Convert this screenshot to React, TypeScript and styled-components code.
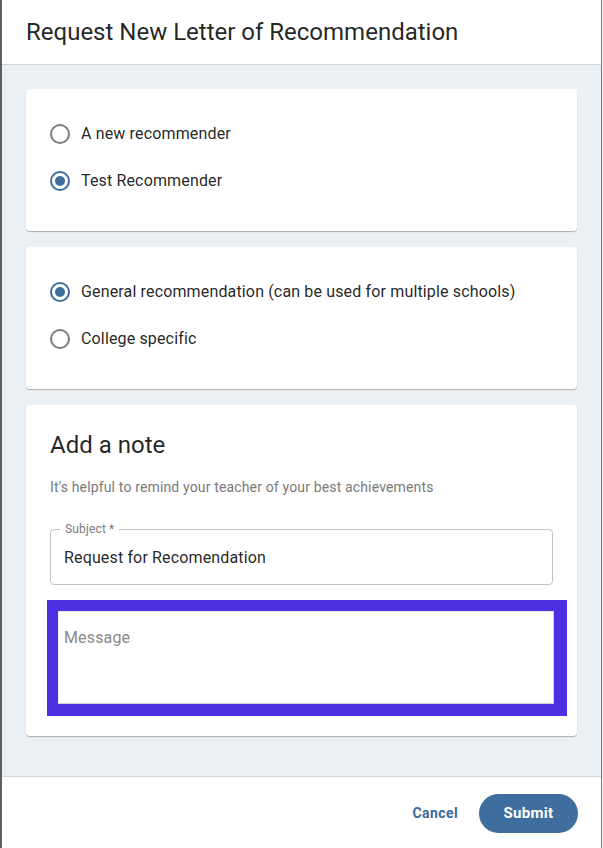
import React from "react";
import styled, { createGlobalStyle } from "styled-components";

const Global = createGlobalStyle`
  html, body { margin: 0; padding: 0; }
  body {
    background: #ffffff;
    font-family: Roboto, "Noto Sans", Arial, sans-serif;
    color: rgba(0,0,0,0.87);
  }
  * { box-sizing: border-box; }
`;

const Screen = styled.div`
  display: flex;
  width: 603px;
  height: 848px;
  overflow: hidden;
`;

const Backdrop = styled.div`
  width: 2px;
  background: #5e5e5e;
`;

const RightEdge = styled.div`
  width: 2px;
  border-left: 1px solid #7a7a7a;
  background: #f4f4f4;
`;

const Dialog = styled.div`
  width: 599px;
  height: 848px;
  display: flex;
  flex-direction: column;
  background: #fff;
`;

const Header = styled.div`
  height: 65px;
  padding: 0 24px;
  display: flex;
  align-items: center;
  border-bottom: 1px solid #cfd6dc;
  flex-shrink: 0;
`;

const Title = styled.h2`
  margin: 0;
  font-size: 24px;
  font-weight: 400;
  line-height: 32px;
  color: rgba(0,0,0,0.87);
  padding-bottom: 1px;
`;

const Body = styled.div`
  background: #ebf0f4;
  padding: 24px 24px 40px 24px;
  display: flex;
  flex-direction: column;
  gap: 16px;
  flex: 1;
`;

const Card = styled.div<{ $pad?: string }>`
  background: #fff;
  border-radius: 4px;
  box-shadow: 0 1px 1px rgba(0,0,0,0.28);
  padding: ${(p) => p.$pad || "21px 24px 27px 24px"};
  display: flex;
  flex-direction: column;
`;

const Row = styled.label`
  height: 47px;
  display: flex;
  align-items: center;
  gap: 11px;
  font-size: 16px;
  line-height: 24px;
  letter-spacing: 0.15px;
  color: rgba(0,0,0,0.87);
  cursor: pointer;
`;

const RadioCircle = styled.span<{ $checked?: boolean }>`
  width: 20px;
  height: 20px;
  border-radius: 50%;
  border: 2px solid ${(p) => (p.$checked ? "#3d6e9e" : "#7b7b7b")};
  display: flex;
  align-items: center;
  justify-content: center;
  flex-shrink: 0;
  &::after {
    content: "";
    width: 10px;
    height: 10px;
    border-radius: 50%;
    background: ${(p) => (p.$checked ? "#3d6e9e" : "transparent")};
  }
`;

const NoteTitle = styled.h3`
  margin: 0;
  font-size: 24px;
  font-weight: 400;
  line-height: 32px;
  color: rgba(0,0,0,0.87);
`;

const Helper = styled.p`
  margin: 16px 0 0 0;
  font-size: 14px;
  line-height: 20px;
  letter-spacing: 0.15px;
  color: #7a7a7a;
`;

const Field = styled.div`
  position: relative;
  margin-top: 32px;
  height: 56px;
  border: 1px solid #c4c4c4;
  border-radius: 4px;
  display: flex;
  align-items: center;
  padding: 0 13px;
  font-size: 16px;
  letter-spacing: 0.15px;
  color: rgba(0,0,0,0.87);
`;

const FieldLabel = styled.span`
  position: absolute;
  top: -9px;
  left: 9px;
  padding: 0 5px;
  background: #fff;
  font-size: 12px;
  line-height: 16px;
  letter-spacing: 0.15px;
  color: #7a7a7a;
`;

const Focus = styled.div`
  margin: 15px -14px 0 -3px;
  border-style: solid;
  border-color: #4c31e2;
  border-width: 11px 13px 12px 11px;
`;

const MessageBox = styled.div`
  height: 93px;
  border: 1px solid #cfcfcf;
  border-left-color: #e8e8e8;
  border-top-color: #e8e8e8;
  padding: 14px 5px;
  font-size: 16px;
  line-height: 24px;
  letter-spacing: 0.15px;
  color: #8a8a8a;
`;

const Footer = styled.div`
  height: 73px;
  border-top: 1px solid #cfd6dc;
  display: flex;
  align-items: center;
  justify-content: flex-end;
  padding: 0 23px 0 0;
  gap: 9px;
  flex-shrink: 0;
`;

const TextButton = styled.button`
  border: none;
  background: transparent;
  font-family: inherit;
  font-size: 14px;
  font-weight: 700;
  letter-spacing: 0.4px;
  color: #3a6b9a;
  padding: 0 12px;
  height: 39px;
  cursor: pointer;
`;

const PrimaryButton = styled.button`
  border: none;
  background: #3d6e9e;
  color: #fff;
  font-family: inherit;
  font-size: 15px;
  font-weight: 700;
  letter-spacing: 0.3px;
  width: 99px;
  height: 39px;
  border-radius: 20px;
  cursor: pointer;
`;

const Radio = ({ checked, label }: { checked?: boolean; label: string }) => (
  <Row>
    <RadioCircle $checked={checked} />
    <span>{label}</span>
  </Row>
);

export default function App() {
  return (
    <>
      <Global />
      <Screen>
        <Backdrop />
        <Dialog>
          <Header>
            <Title>Request New Letter of Recommendation</Title>
          </Header>
          <Body>
            <Card>
              <Radio label="A new recommender" />
              <Radio checked label="Test Recommender" />
            </Card>
            <Card>
              <Radio checked label="General recommendation (can be used for multiple schools)" />
              <Radio label="College specific" />
            </Card>
            <Card $pad="24px 24px 20px 24px">
              <NoteTitle>Add a note</NoteTitle>
              <Helper>It's helpful to remind your teacher of your best achievements</Helper>
              <Field>
                <FieldLabel>Subject *</FieldLabel>
                Request for Recomendation
              </Field>
              <Focus>
                <MessageBox>Message</MessageBox>
              </Focus>
            </Card>
          </Body>
          <Footer>
            <TextButton>Cancel</TextButton>
            <PrimaryButton>Submit</PrimaryButton>
          </Footer>
        </Dialog>
        <RightEdge />
      </Screen>
    </>
  );
}
